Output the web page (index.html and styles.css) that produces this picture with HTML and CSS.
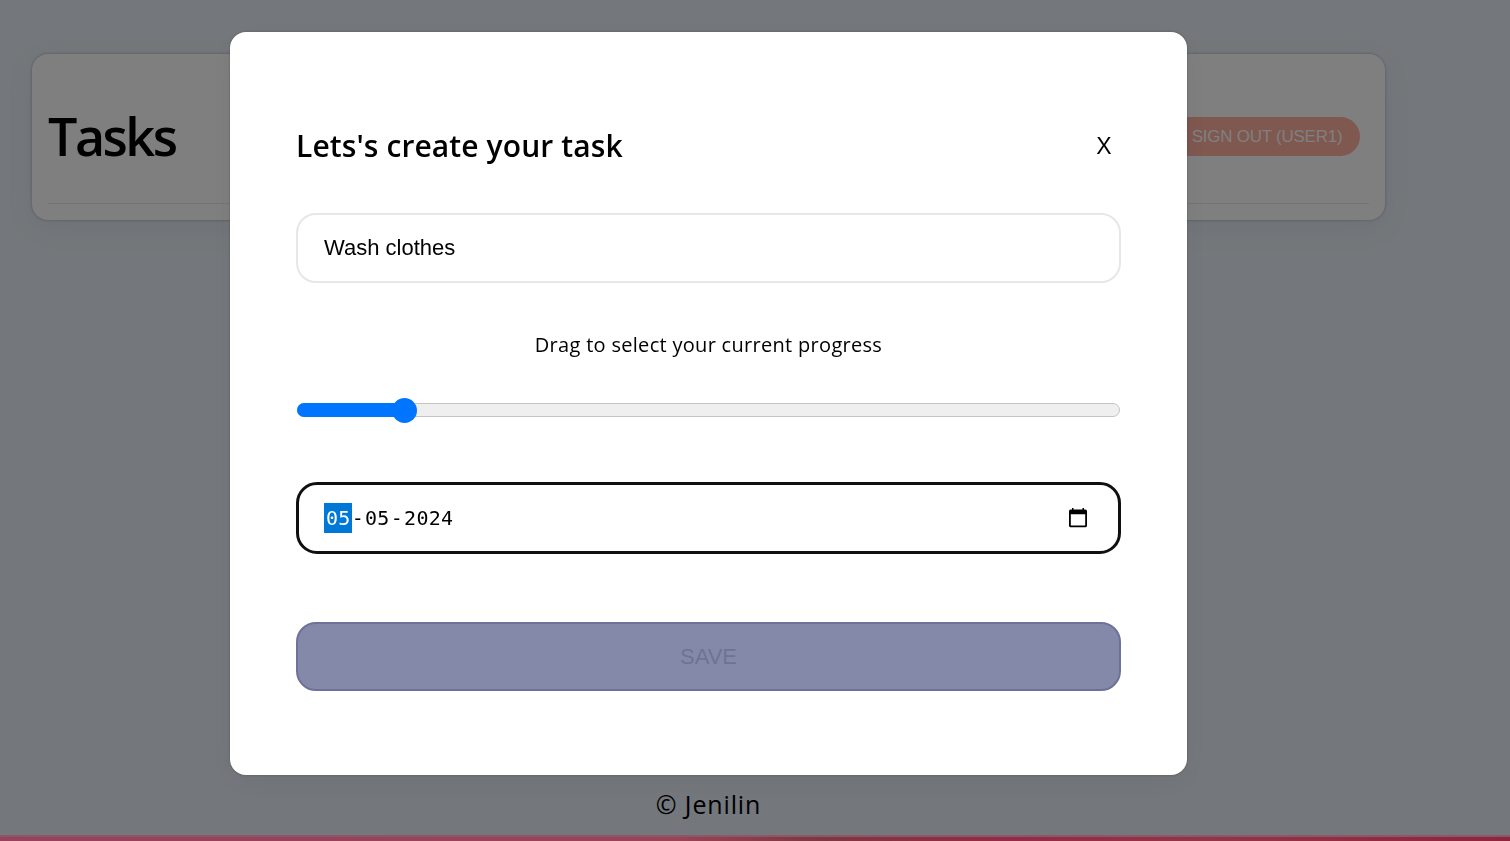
FILE: index.html
```html
<!DOCTYPE html>
<html lang="en">
<head>
<meta charset="utf-8">
<title>Tasks</title>
<link rel="stylesheet" href="styles.css">
</head>
<body>
<div class="page">
  <main class="app">
    <header class="list-header">
      <h1 class="list-title"><span>Tasks</span></h1>
      <button class="signout">SIGN OUT (USER1)</button>
    </header>
  </main>
  <footer class="copyright"><span>© Jenilin</span></footer>
  <div class="bottom-strip"></div>
</div>
<div class="overlay">
  <section class="modal">
    <div class="modal-head">
      <h3 class="modal-title"><span>Lets's create your task</span></h3>
      <button class="close">X</button>
    </div>
    <div class="field name-field"><span>Wash clothes</span></div>
    <div class="progress-label"><span>Drag to select your current progress</span></div>
    <div class="slider"><div class="track"><div class="fill"></div></div></div>
    <div class="field date-field">
      <div class="date"><span class="day">05</span><span>-</span><span class="part">05</span><span>-</span><span class="part">2024</span></div>
      <svg class="calendar" viewBox="0 0 18 20" width="18" height="20"><path fill-rule="evenodd" d="M3 0h1.5v1.5h9V0H15v1.5h1.3A1.7 1.7 0 0 1 18 3.2v14.6a1.4 1.4 0 0 1-1.4 1.4H1.4A1.4 1.4 0 0 1 0 17.800V3.200A1.700 1.700 0 0 1 1.700 1.500H3ZM1.800 6.200v11.200h14.400V6.200Z"/></svg>
    </div>
    <button class="save">SAVE</button>
  </section>
</div>
</body>
</html>
```

FILE: styles.css
```css
* { box-sizing: border-box; }
body { margin: 0; height: 841px; overflow: hidden; background: #e9eff6; color: #000; font-family: "Trebuchet MS", "Open Sans", sans-serif; }
h1, h3 { margin: 0; }
button { border: 0; padding: 0; font-family: Arial, "Liberation Sans", sans-serif; }
.page { display: flex; flex-direction: column; height: 841px; }
.app { width: 1353px; height: 166px; margin: 54px 0 0 32px; padding: 0 16px; background: #fff; border-radius: 16px; box-shadow: 0 0 3px rgba(60,80,100,.4), 0 8px 28px rgba(90,110,140,.08); }
.list-header { display: flex; justify-content: space-between; align-items: center; height: 150px; padding: 15px 9px 0 0; border-bottom: 1px solid #e8e9ee; }
.list-title { font-size: 52px; font-weight: 600; line-height: 72px; letter-spacing: -2.5px; }
.signout { width: 190px; height: 39px; padding: 1px 0 0 4px; border-radius: 20px; background: #ffb0a1; color: #fff; font-size: 17px; letter-spacing: -.25px; }
.copyright { margin-top: auto; padding: 0 93px 1px 0; text-align: center; font-size: 25px; line-height: 60px; letter-spacing: .85px; }
.bottom-strip { position: relative; z-index: 2; height: 6px; border-top: 2px solid #8b5966; background: linear-gradient(90deg, #96425f, #984356 45%, #7d3840 54%, #932b46 67%, #923548 80%, #8d253f); }
.overlay { position: fixed; inset: 0; padding: 32px 0 0 230px; background: rgba(0,0,0,.5); }
.modal { display: flex; flex-direction: column; width: 957px; height: 743px; padding: 92px 66px 0; border-radius: 16px; background: #fff; box-shadow: 0 0 3px rgba(0,0,0,.25), 0 8px 30px rgba(0,0,0,.05); }
.modal-head { display: flex; justify-content: space-between; height: 89px; }
.modal-title { font-size: 30px; font-weight: 600; line-height: 44px; letter-spacing: .1px; white-space: nowrap; }
.close { width: 34px; height: 44px; background: none; font-size: 23px; color: #000; }
.field { display: flex; align-items: center; height: 70px; padding: 0 26px; border: 2px solid #e7e7eb; border-radius: 20px; background: #fff; }
.name-field { font: 22px/30px Arial, "Liberation Sans", sans-serif; }
.progress-label { margin-top: 47px; text-align: center; font-size: 20px; line-height: 30px; letter-spacing: .3px; }
.slider { display: flex; align-items: center; height: 26px; margin: 37px 1px 0; }
.track { width: 100%; height: 14px; border: 1px solid #c5c5c5; border-radius: 7px; background: #efefef; }
.fill { position: relative; width: 109px; height: 14px; margin: -1px; border-radius: 7px; background: #0075ff; }
.fill::after { content: ""; position: absolute; right: -11px; top: -5.5px; width: 25px; height: 25px; border-radius: 50%; background: #0075ff; }
.date-field { justify-content: space-between; height: 72px; margin-top: 59px; padding: 0 31px 0 25px; border: 3px solid #101010; border-radius: 21px; }
.date { display: flex; font: 20px/30px Consolas, "DejaVu Sans Mono", monospace; letter-spacing: .3px; }
.day { padding: 0 1px 0 2px; color: #fff; background: #0078d7; }
.part { padding: 0 1px; }
.save { height: 69px; margin-top: 68px; border: 2px solid #6d7299; border-radius: 20px; background: #8489aa; color: #6e7396; font-size: 22px; }
```
